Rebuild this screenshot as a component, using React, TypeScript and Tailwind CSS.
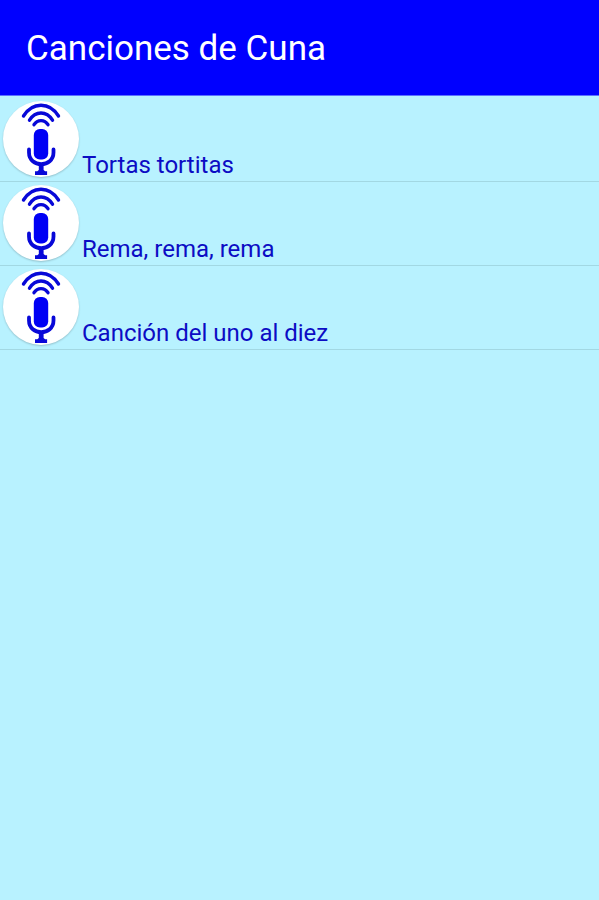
const songs = ["Tortas tortitas", "Rema, rema, rema", "Canción del uno al diez"];

function MicIcon() {
  return (
    <svg
      viewBox="0 0 76 76"
      className="size-[76px] shrink-0 rounded-full bg-white shadow-[0_1px_2px_rgba(0,0,0,0.2)]"
      aria-hidden="true"
    >
      <g fill="none" stroke="#0808d8" strokeWidth="3.4" strokeLinecap="round">
        <path d="M20.5 15C29.5 .6 46.500 .6 55.5 15" />
        <path d="M26.5 19.2C32.5 9.6 43.5 9.6 49.5 19.2" />
        <path d="M31 23.7C34.5 18.2 41.5 18.2 45 23.7" />
      </g>
      <rect x="30.8" y="28" width="14.4" height="30.5" rx="6" fill="#0000f5" />
      <path
        d="M26 48.5v3c0 15.5 24.5 15.5 24.5 0v-3"
        fill="none"
        stroke="#0808d8"
        strokeWidth="3.8"
        strokeLinecap="round"
      />
      <path d="M35.8 63h4.800v6l1.5 1.2h2v3.8H32v-3.8h2.3l1.5-1.2z" fill="#0808d8" />
    </svg>
  );
}

export default function App() {
  return (
    <div className="flex min-h-screen flex-col bg-[#b8f2ff] font-['Roboto',sans-serif]">
      <header className="flex h-24 items-center border-b border-[#5c70ff] bg-[#0000ff] px-[26px] pt-1">
        <h1 className="text-[35px] text-white">Canciones de Cuna</h1>
      </header>
      <main>
        <ul className="pt-0.5">
          {songs.map((song) => (
            <li key={song} className="border-b border-[#a2d8e3]">
              <button
                type="button"
                className="flex h-[83px] w-full items-end gap-[3px] px-[3px] pb-1 text-left text-2xl/6 text-[#0c0cc4]"
              >
                <MicIcon />
                <span>{song}</span>
              </button>
            </li>
          ))}
        </ul>
      </main>
    </div>
  );
}
